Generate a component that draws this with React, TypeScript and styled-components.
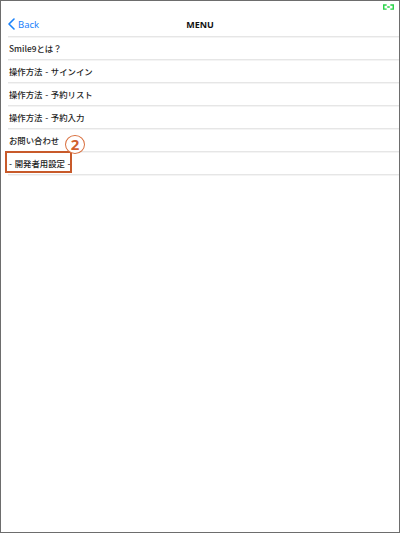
import React from "react"
import styled, { createGlobalStyle } from "styled-components"

const GlobalStyle = createGlobalStyle`
  html, body {
    margin: 0;
    padding: 0;
    background: #ffffff;
  }
  body {
    font-family: "Noto Sans CJK JP", "Noto Sans", sans-serif;
  }
`

const items = [
  "Smile9とは？",
  "操作方法 - サインイン",
  "操作方法 - 予約リスト",
  "操作方法 - 予約入力",
  "お問い合わせ",
  "- 開発者用設定 -",
]

const App = () => {
  return (
    <>
      <GlobalStyle />
      <Frame>
        <StatusBar>
          <Battery viewBox="0 0 12 6">
            <path d="M0 0h4v1.5H1.6v3H4V6H0z" fill="#2bd44a" />
            <path d="M12 0H8v1.5h2.4v3H8V6h4z" fill="#2bd44a" />
            <rect x="4.6" y="2.2" width="2.8" height="1.6" fill="#2bd44a" />
          </Battery>
        </StatusBar>
        <NavBar>
          <BackButton>
            <svg width="7" height="12" viewBox="0 0 7 12">
              <path
                d="M6 1L1 6l5 5"
                fill="none"
                stroke="#1a82fb"
                strokeWidth="1.6"
                strokeLinecap="round"
                strokeLinejoin="round"
              />
            </svg>
            Back
          </BackButton>
          <Title>MENU</Title>
        </NavBar>
        <List>
          {items.map((item, index) => (
            <Row key={index}>{item}</Row>
          ))}
        </List>
        <Highlight />
        <Marker>2</Marker>
      </Frame>
    </>
  )
}

const Frame = styled.div`
  position: relative;
  width: 400px;
  height: 533px;
  box-sizing: border-box;
  border: 1px solid #6d6d6d;
  background: #ffffff;
  overflow: hidden;
`

const StatusBar = styled.div`
  height: 11px;
  display: flex;
  justify-content: flex-end;
  align-items: center;
  padding-right: 5px;
`

const Battery = styled.svg`
  width: 11px;
  height: 6px;
  margin-top: 1px;
`

const NavBar = styled.div`
  height: 24px;
  display: grid;
  grid-template-columns: 1fr auto 1fr;
  align-items: center;
  margin-left: 7px;
  border-bottom: 1px solid #e6e6e6;
  box-shadow: 0 1px 0 #f4f4f4;
`

const BackButton = styled.div`
  display: flex;
  align-items: center;
  gap: 3px;
  color: #1a82fb;
  font-family: "Noto Sans", sans-serif;
  font-size: 9.5px;
  svg {
    display: block;
  }
`

const Title = styled.div`
  font-family: "Noto Sans", sans-serif;
  font-weight: 700;
  font-size: 9px;
  color: #111;
  margin-right: 7px;
`

const List = styled.div`
  display: flex;
  flex-direction: column;
  margin-left: 7px;
`

const Row = styled.div`
  height: 22px;
  display: flex;
  align-items: center;
  padding-left: 1px;
  font-size: 8.4px;
  font-weight: 500;
  word-spacing: 0.8px;
  color: #1e1e1e;
  border-bottom: 1px solid #e6e6e6;
  box-shadow: 0 1px 0 #f4f4f4;
`

const Highlight = styled.div`
  position: absolute;
  left: 4px;
  top: 150px;
  width: 67px;
  height: 22px;
  box-sizing: border-box;
  border: 2px solid #c85a2a;
`

const Marker = styled.div`
  position: absolute;
  left: 64px;
  top: 134px;
  width: 20px;
  height: 19px;
  box-sizing: border-box;
  border: 1px solid #d9703f;
  border-radius: 50%;
  background: #ffffff;
  color: #d0602e;
  font-family: "Noto Sans", sans-serif;
  font-weight: 700;
  font-size: 15px;
  line-height: 17px;
  text-align: center;
`

export default App
